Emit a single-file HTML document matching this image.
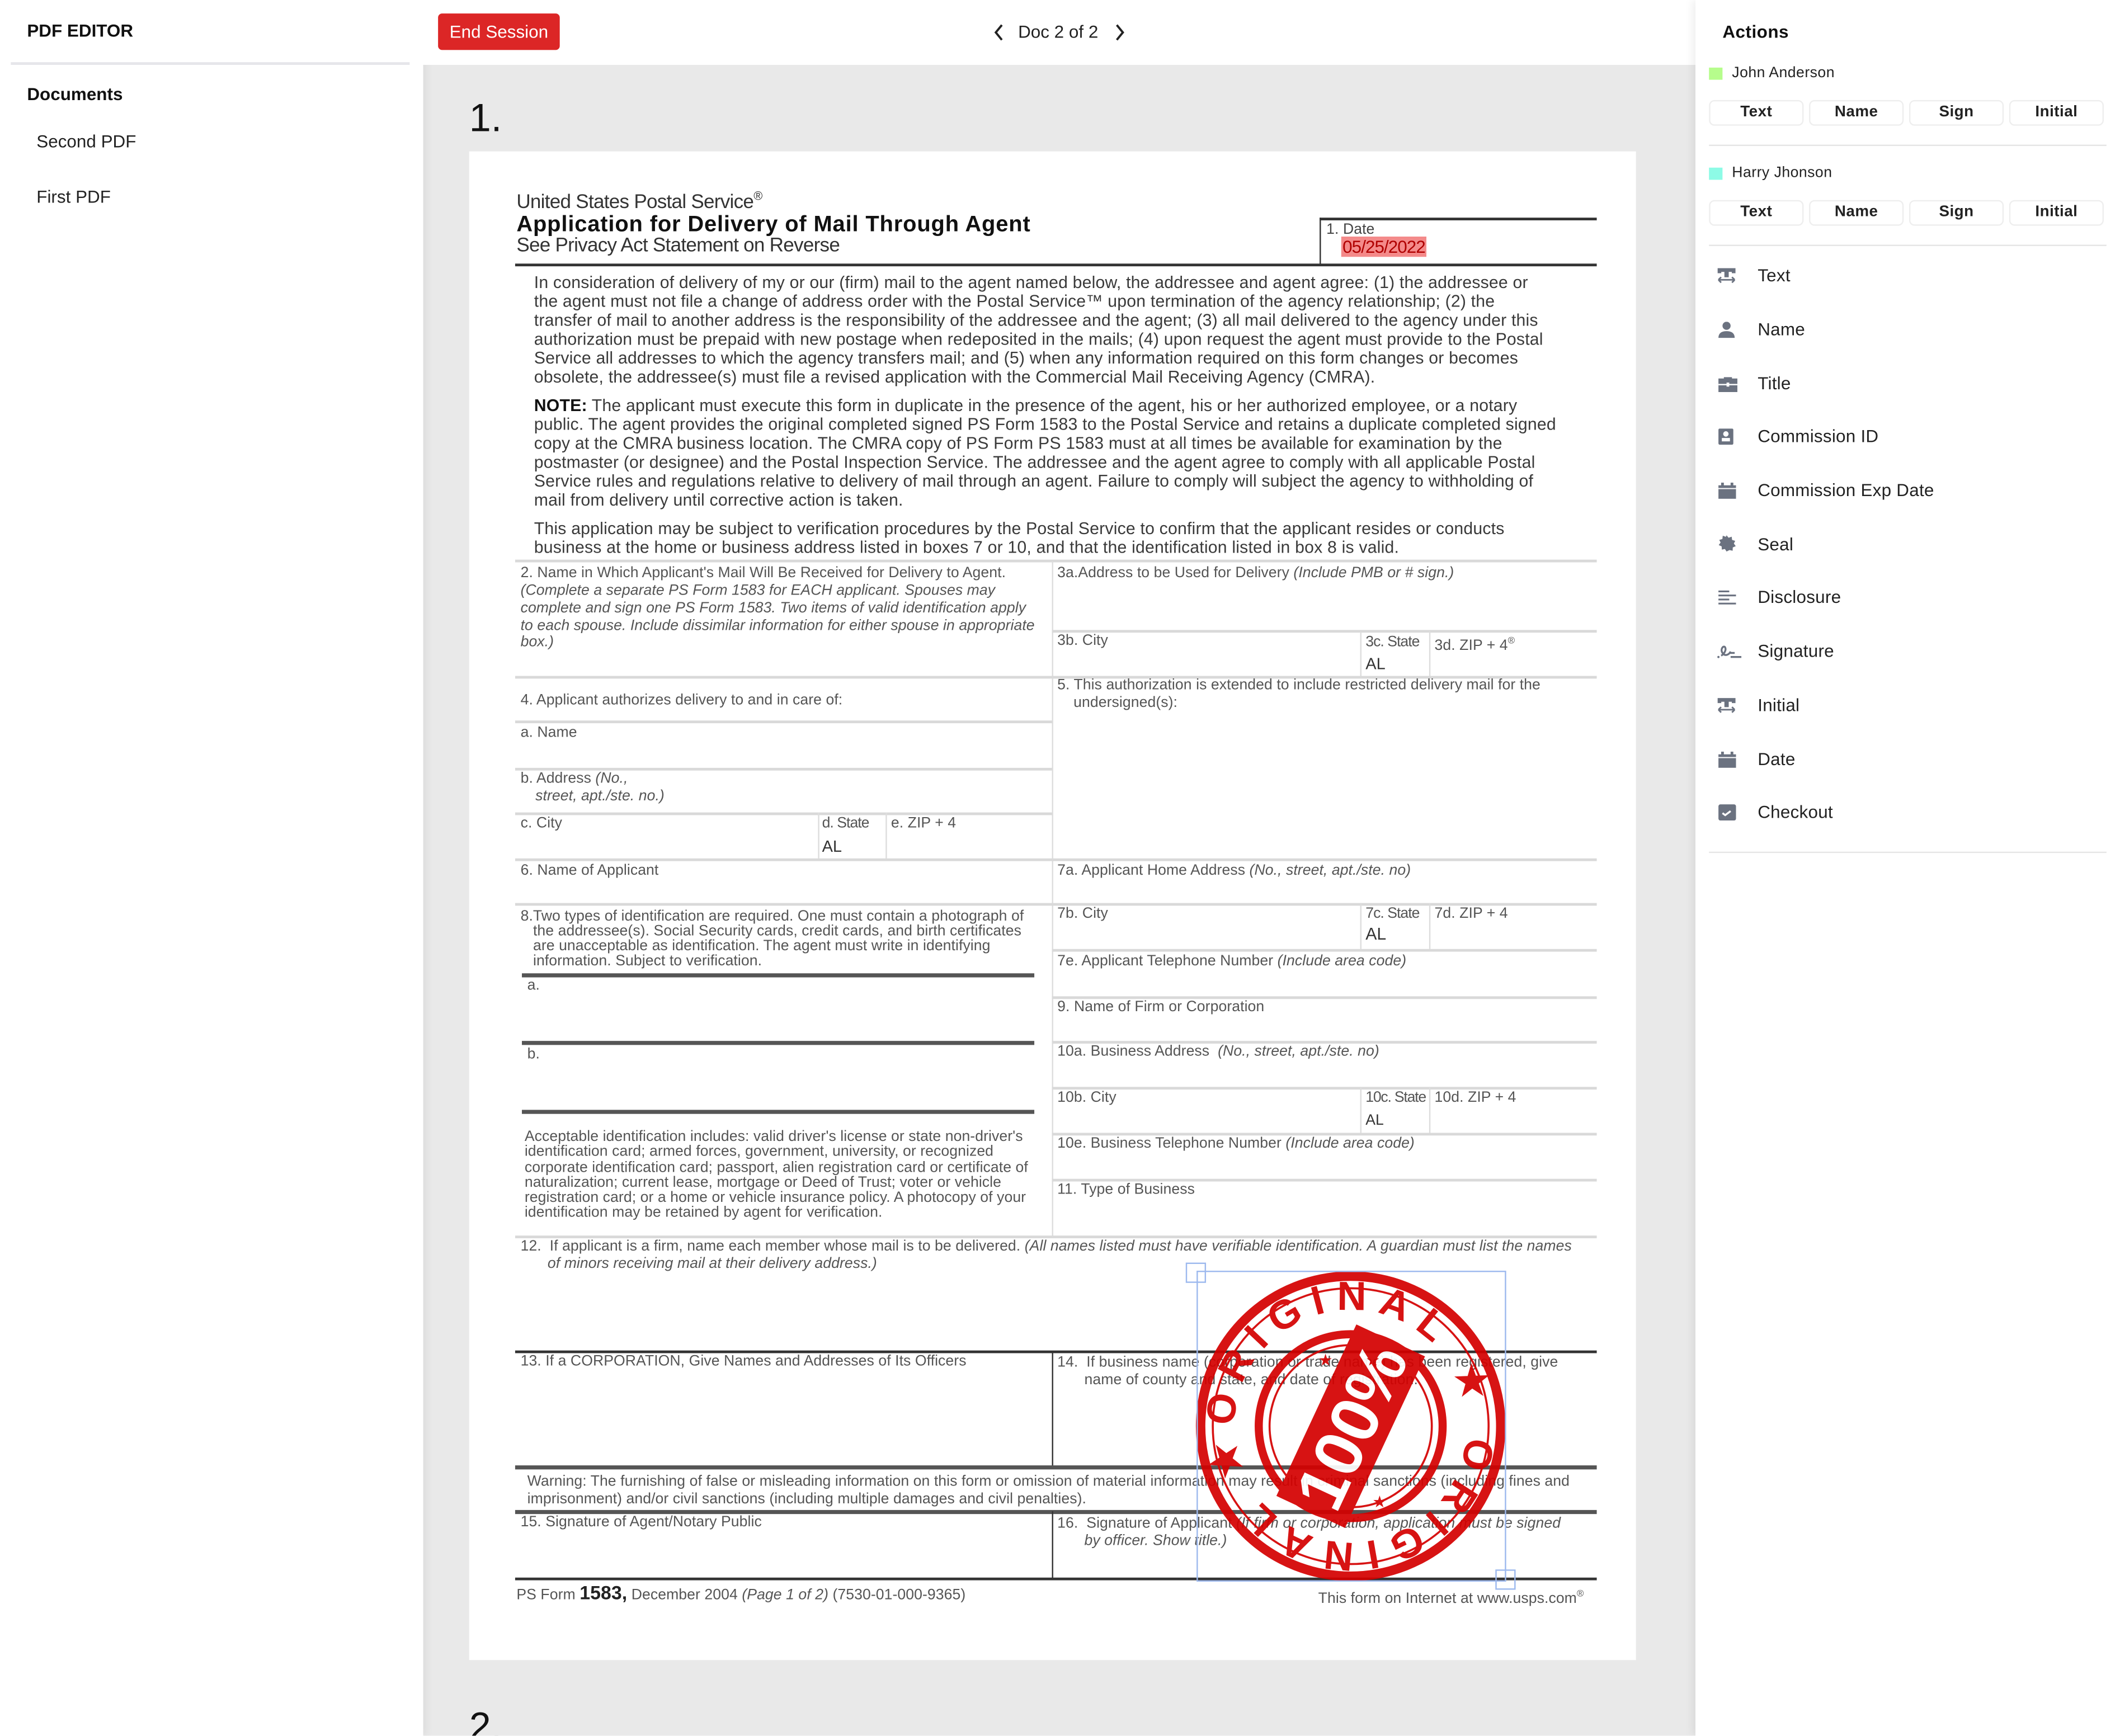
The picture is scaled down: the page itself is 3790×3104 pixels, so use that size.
<!DOCTYPE html>
<html><head><meta charset="utf-8">
<style>
*{margin:0;padding:0;box-sizing:border-box}
html,body{width:3790px;height:3102px;overflow:hidden;background:#fff;font-family:"Liberation Sans",sans-serif}
#s{position:absolute;left:0;top:0;width:1568px;height:1284px;transform:scale(2.41709);transform-origin:0 0;overflow:hidden}
.a{position:absolute;white-space:nowrap}
#left{position:absolute;left:0;top:0;width:313px;height:1284px;background:#fff;box-shadow:2px 0 6px rgba(0,0,0,.06)}
#main{position:absolute;left:313px;top:48px;width:941px;height:1236px;background:#e9e9e9}
#top{position:absolute;left:313px;top:0;width:941px;height:48px;background:#fff}
#right{position:absolute;left:1254px;top:0;width:314px;height:1284px;background:#fff;box-shadow:-2px 0 6px rgba(0,0,0,.07)}
.btn{position:absolute;top:0;height:19px;width:70px;border:1.5px solid #eee;border-radius:4px;font-size:11.5px;font-weight:bold;color:#222;text-align:center;line-height:16px;letter-spacing:.2px}
.it{position:absolute;left:46px;font-size:13px;color:#222;letter-spacing:.1px}
.ic{position:absolute;left:16px;width:14px;height:12px}
#page{position:absolute;left:347px;top:112px;width:863px;height:1116px;background:#fff}
.p{position:absolute;white-space:nowrap;font-size:12.5px;letter-spacing:.08px;color:#3a3a3a;line-height:14px}
.l{position:absolute;white-space:nowrap;font-size:11px;letter-spacing:.03px;color:#555;line-height:12px}
.h{position:absolute;background:#d9d9d9;height:1.5px}
.hd{position:absolute;background:#333;height:2px}
.v{position:absolute;background:#ddd;width:1px}
.vd{position:absolute;background:#333;width:1.3px}
i{font-style:italic}
</style></head><body>
<div id="s">
<div id="main">
  <div class="a" style="left:34px;top:24px;font-size:29px;color:#111">1.</div>
  <div class="a" style="left:34px;top:1214px;font-size:29px;color:#111">2.</div>
</div>
<div id="left">
  <div class="a" style="left:20px;top:15px;font-size:13px;font-weight:bold;color:#111">PDF EDITOR</div>
  <div class="a" style="left:8px;top:46px;width:295px;height:1.5px;background:#e6e6ea"></div>
  <div class="a" style="left:20px;top:62px;font-size:13px;font-weight:bold;color:#111">Documents</div>
  <div class="a" style="left:27px;top:97px;font-size:13px;color:#222">Second PDF</div>
  <div class="a" style="left:27px;top:138px;font-size:13px;color:#222">First PDF</div>
</div>
<div id="top">
  <div class="a" style="left:11px;top:10px;width:90px;height:27px;background:#dc2626;border-radius:3px;color:#fff;font-size:13px;text-align:center;line-height:27px">End Session</div>
  <svg class="a" style="left:421px;top:17px" width="10" height="14" viewBox="0 0 10 14"><path d="M7 1.5L2.5 7L7 12.5" fill="none" stroke="#222" stroke-width="1.6"/></svg>
  <div class="a" style="left:440px;top:16px;font-size:13px;color:#222">Doc 2 of 2</div>
  <svg class="a" style="left:510px;top:17px" width="10" height="14" viewBox="0 0 10 14"><path d="M3 1.5L7.5 7L3 12.5" fill="none" stroke="#222" stroke-width="1.6"/></svg>
</div>
<div id="right">
  <div class="a" style="left:20px;top:16px;font-size:13px;font-weight:bold;color:#111;letter-spacing:.2px">Actions</div>
  <div class="a" style="left:10px;top:50px;width:10px;height:9px;background:#b6fd8c"></div>
  <div class="a" style="left:27px;top:48px;font-size:11px;color:#222;letter-spacing:.2px">John Anderson</div>
  <div class="a" style="left:10px;top:74px;width:294px;height:20px">
    <div class="btn" style="left:0">Text</div><div class="btn" style="left:74px">Name</div><div class="btn" style="left:148px">Sign</div><div class="btn" style="left:222px">Initial</div>
  </div>
  <div class="a" style="left:10px;top:107px;width:294px;height:1px;background:#e5e5e5"></div>
  <div class="a" style="left:10px;top:124px;width:10px;height:9px;background:#8dfbe6"></div>
  <div class="a" style="left:27px;top:122px;font-size:11px;color:#222;letter-spacing:.2px">Harry Jhonson</div>
  <div class="a" style="left:10px;top:148px;width:294px;height:20px">
    <div class="btn" style="left:0">Text</div><div class="btn" style="left:74px">Name</div><div class="btn" style="left:148px">Sign</div><div class="btn" style="left:222px">Initial</div>
  </div>
  <div class="a" style="left:10px;top:181px;width:294px;height:1px;background:#e5e5e5"></div>

  <svg class="ic" style="top:198px" viewBox="0 0 14 12"><path d="M1 1h12v2.5h-1.5v-1h-3.5v4h-2v-4h-3.5v1h-1.5zM1 9h12M1 9l2-2M1 9l2 2M13 9l-2-2M13 9l-2 2" fill="#6b7280" stroke="#6b7280" stroke-width="1.2"/></svg>
  <div class="it" style="top:196px">Text</div>
  <svg class="ic" style="top:238px" viewBox="0 0 14 12"><circle cx="7" cy="3" r="3" fill="#6b7280"/><path d="M1 12c0-4 3-5 6-5s6 1 6 5z" fill="#6b7280"/></svg>
  <div class="it" style="top:236px">Name</div>
  <svg class="ic" style="top:278px;width:16px" viewBox="0 0 16 12"><path d="M5 2V1h6v1h4v10H1V2z" fill="#6b7280"/><rect x="1" y="6" width="14" height="1" fill="#fff"/><rect x="7" y="5" width="2" height="3" fill="#fff"/></svg>
  <div class="it" style="top:276px">Title</div>
  <svg class="ic" style="top:317px" viewBox="0 0 14 12"><rect x="1" y="0" width="11" height="12" rx="1" fill="#6b7280"/><circle cx="6.5" cy="4" r="2" fill="#fff"/><rect x="3.5" y="7" width="6" height="2.5" fill="#fff"/></svg>
  <div class="it" style="top:315px">Commission ID</div>
  <svg class="ic" style="top:357px" viewBox="0 0 14 12"><rect x="1" y="2" width="13" height="10" fill="#6b7280"/><rect x="3" y="0" width="2" height="3" fill="#6b7280"/><rect x="10" y="0" width="2" height="3" fill="#6b7280"/><rect x="1" y="4" width="13" height=".8" fill="#fff"/></svg>
  <div class="it" style="top:355px">Commission Exp Date</div>
  <svg class="ic" style="top:396px" viewBox="0 0 14 12"><path d="M7 0l1.5 1.8 2.3-.8.3 2.4 2.3.7-1 2 1.4 1.9-2.2 1-.1 2.4-2.3-.5L7 12 5.8 10.1l-2.3.5-.1-2.4-2.2-1L2.6 5.3 1.6 3.4l2.3-.7.3-2.4 2.3.8z" fill="#6b7280"/></svg>
  <div class="it" style="top:395px">Seal</div>
  <svg class="ic" style="top:436px" viewBox="0 0 14 12"><path d="M1 1.5h8M1 4.5h13M1 7.5h8M1 10.5h13" stroke="#6b7280" stroke-width="1.3"/></svg>
  <div class="it" style="top:434px">Disclosure</div>
  <svg class="ic" style="top:476px;width:18px" viewBox="0 0 18 12"><path d="M3 9c2-1 4-4 3-6S2 4 4 7s5 1 6-1M9 7h4M10 10h8" fill="none" stroke="#6b7280" stroke-width="1.4"/><circle cx="1" cy="10" r=".8" fill="#6b7280"/></svg>
  <div class="it" style="top:474px">Signature</div>
  <svg class="ic" style="top:516px" viewBox="0 0 14 12"><path d="M1 1h12v2.5h-1.5v-1h-3.5v4h-2v-4h-3.5v1h-1.5zM1 9h12M1 9l2-2M1 9l2 2M13 9l-2-2M13 9l-2 2" fill="#6b7280" stroke="#6b7280" stroke-width="1.2"/></svg>
  <div class="it" style="top:514px">Initial</div>
  <svg class="ic" style="top:556px" viewBox="0 0 14 12"><rect x="1" y="2" width="13" height="10" fill="#6b7280"/><rect x="3" y="0" width="2" height="3" fill="#6b7280"/><rect x="10" y="0" width="2" height="3" fill="#6b7280"/><rect x="1" y="4" width="13" height=".8" fill="#fff"/></svg>
  <div class="it" style="top:554px">Date</div>
  <svg class="ic" style="top:595px" viewBox="0 0 14 12"><rect x="1" y="0" width="13" height="12" rx="1.5" fill="#6b7280"/><path d="M4 6.5l2 1.5 4-3" fill="none" stroke="#fff" stroke-width="1.4"/></svg>
  <div class="it" style="top:593px">Checkout</div>
  <div class="a" style="left:10px;top:630px;width:294px;height:1px;background:#e5e5e5"></div>
</div>

<div id="page">
<div style="position:absolute;left:-347px;top:-112px;width:1568px;height:1284px">
  <div class="a" style="left:382px;top:140px;font-size:14.5px;letter-spacing:-.3px;color:#333">United States Postal Service<sup style="font-size:9px">®</sup></div>
  <div class="a" style="left:382px;top:157px;font-size:16.5px;font-weight:bold;letter-spacing:.35px;color:#111">Application for Delivery of Mail Through Agent</div>
  <div class="a" style="left:382px;top:174px;font-size:14.5px;letter-spacing:-.3px;color:#333">See Privacy Act Statement on Reverse</div>
  <div class="vd" style="left:976px;top:161px;height:35px"></div>
  <div class="hd" style="left:976px;top:161px;width:205px"></div>
  <div class="l" style="left:981px;top:164px;color:#444">1. Date</div>
  <div class="a" style="left:992px;top:175px;font-size:13px;letter-spacing:-.4px;color:#b00000;background:#f48a8a;padding:0 1px;line-height:15px">05/25/2022</div>
  <div class="hd" style="left:381px;top:195px;width:800px"></div>

  <div class="p" style="left:395px;top:202px">In consideration of delivery of my or our (firm) mail to the agent named below, the addressee and agent agree: (1) the addressee or</div>
  <div class="p" style="left:395px;top:216px">the agent must not file a change of address order with the Postal Service™ upon termination of the agency relationship; (2) the</div>
  <div class="p" style="left:395px;top:230px">transfer of mail to another address is the responsibility of the addressee and the agent; (3) all mail delivered to the agency under this</div>
  <div class="p" style="left:395px;top:244px">authorization must be prepaid with new postage when redeposited in the mails; (4) upon request the agent must provide to the Postal</div>
  <div class="p" style="left:395px;top:258px">Service all addresses to which the agency transfers mail; and (5) when any information required on this form changes or becomes</div>
  <div class="p" style="left:395px;top:272px">obsolete, the addressee(s) must file a revised application with the Commercial Mail Receiving Agency (CMRA).</div>
  <div class="p" style="left:395px;top:293px"><b style="color:#111">NOTE:</b> The applicant must execute this form in duplicate in the presence of the agent, his or her authorized employee, or a notary</div>
  <div class="p" style="left:395px;top:307px">public. The agent provides the original completed signed PS Form 1583 to the Postal Service and retains a duplicate completed signed</div>
  <div class="p" style="left:395px;top:321px">copy at the CMRA business location. The CMRA copy of PS Form PS 1583 must at all times be available for examination by the</div>
  <div class="p" style="left:395px;top:335px">postmaster (or designee) and the Postal Inspection Service. The addressee and the agent agree to comply with all applicable Postal</div>
  <div class="p" style="left:395px;top:349px">Service rules and regulations relative to delivery of mail through an agent. Failure to comply will subject the agency to withholding of</div>
  <div class="p" style="left:395px;top:363px">mail from delivery until corrective action is taken.</div>
  <div class="p" style="left:395px;top:384px">This application may be subject to verification procedures by the Postal Service to confirm that the applicant resides or conducts</div>
  <div class="p" style="left:395px;top:398px">business at the home or business address listed in boxes 7 or 10, and that the identification listed in box 8 is valid.</div>

  <div class="h" style="left:381px;top:414px;width:800px"></div>
  <div class="v" style="left:778px;top:415px;height:500px"></div>
  <div class="l" style="left:385px;top:418px">2. Name in Which Applicant's Mail Will Be Received for Delivery to Agent.</div>
  <div class="l" style="left:385px;top:431px"><i>(Complete a separate PS Form 1583 for EACH applicant. Spouses may</i></div>
  <div class="l" style="left:385px;top:444px"><i>complete and sign one PS Form 1583. Two items of valid identification apply</i></div>
  <div class="l" style="left:385px;top:457px"><i>to each spouse. Include dissimilar information for either spouse in appropriate</i></div>
  <div class="l" style="left:385px;top:469px"><i>box.)</i></div>
  <div class="l" style="left:782px;top:418px">3a.Address to be Used for Delivery <i>(Include PMB or # sign.)</i></div>
  <div class="h" style="left:778px;top:466px;width:403px"></div>
  <div class="l" style="left:782px;top:468px">3b. City</div>
  <div class="v" style="left:1006px;top:467px;height:34px"></div>
  <div class="v" style="left:1057px;top:467px;height:34px"></div>
  <div class="l" style="left:1010px;top:469px;letter-spacing:-.4px">3c. State</div>
  <div class="l" style="left:1061px;top:469px">3d. ZIP + 4<sup style="font-size:7px">®</sup></div>
  <div class="a" style="left:1010px;top:484px;font-size:12px;color:#333">AL</div>
  <div class="h" style="left:381px;top:500px;width:800px"></div>
  <div class="l" style="left:385px;top:512px">4. Applicant authorizes delivery to and in care of:</div>
  <div class="l" style="left:782px;top:501px">5. This authorization is extended to include restricted delivery mail for the</div>
  <div class="l" style="left:794px;top:514px">undersigned(s):</div>
  <div class="h" style="left:381px;top:533px;width:397px"></div>
  <div class="l" style="left:385px;top:536px">a. Name</div>
  <div class="h" style="left:381px;top:568px;width:397px"></div>
  <div class="l" style="left:385px;top:570px">b. Address <i>(No.,</i></div>
  <div class="l" style="left:396px;top:583px"><i>street, apt./ste. no.)</i></div>
  <div class="h" style="left:381px;top:601px;width:397px"></div>
  <div class="l" style="left:385px;top:603px">c. City</div>
  <div class="v" style="left:605px;top:601px;height:34px"></div>
  <div class="v" style="left:655px;top:601px;height:34px"></div>
  <div class="l" style="left:608px;top:603px;letter-spacing:-.4px">d. State</div>
  <div class="l" style="left:659px;top:603px">e. ZIP + 4</div>
  <div class="a" style="left:608px;top:619px;font-size:12px;color:#333">AL</div>
  <div class="h" style="left:381px;top:635px;width:800px"></div>
  <div class="l" style="left:385px;top:638px">6. Name of Applicant</div>
  <div class="l" style="left:782px;top:638px">7a. Applicant Home Address <i>(No., street, apt./ste. no)</i></div>
  <div class="h" style="left:381px;top:668px;width:800px"></div>
  <div class="l" style="left:385px;top:673px;line-height:11px">8.Two types of identification are required. One must contain a photograph of<br>&nbsp;&nbsp;&nbsp;the addressee(s). Social Security cards, credit cards, and birth certificates<br>&nbsp;&nbsp;&nbsp;are unacceptable as identification. The agent must write in identifying<br>&nbsp;&nbsp;&nbsp;information. Subject to verification.</div>
  <div class="l" style="left:782px;top:670px">7b. City</div>
  <div class="v" style="left:1006px;top:668px;height:34px"></div>
  <div class="v" style="left:1057px;top:668px;height:34px"></div>
  <div class="l" style="left:1010px;top:670px;letter-spacing:-.4px">7c. State</div>
  <div class="l" style="left:1061px;top:670px">7d. ZIP + 4</div>
  <div class="a" style="left:1010px;top:684px;font-size:12.5px;color:#333">AL</div>
  <div class="h" style="left:778px;top:702px;width:403px"></div>
  <div class="l" style="left:782px;top:705px">7e. Applicant Telephone Number <i>(Include area code)</i></div>
  <div class="a" style="left:386px;top:720px;width:379px;height:2.5px;background:#555"></div>
  <div class="l" style="left:390px;top:723px">a.</div>
  <div class="h" style="left:778px;top:737px;width:403px"></div>
  <div class="l" style="left:782px;top:739px">9. Name of Firm or Corporation</div>
  <div class="a" style="left:386px;top:770px;width:379px;height:2.5px;background:#555"></div>
  <div class="h" style="left:778px;top:770px;width:403px"></div>
  <div class="l" style="left:390px;top:774px">b.</div>
  <div class="l" style="left:782px;top:772px">10a. Business Address&nbsp; <i>(No., street, apt./ste. no)</i></div>
  <div class="h" style="left:778px;top:804px;width:403px"></div>
  <div class="l" style="left:782px;top:806px">10b. City</div>
  <div class="v" style="left:1006px;top:804px;height:34px"></div>
  <div class="v" style="left:1057px;top:804px;height:34px"></div>
  <div class="l" style="left:1010px;top:806px;letter-spacing:-.5px">10c. State</div>
  <div class="l" style="left:1061px;top:806px">10d. ZIP + 4</div>
  <div class="a" style="left:1010px;top:823px;font-size:11px;color:#333">AL</div>
  <div class="a" style="left:386px;top:821px;width:379px;height:2.5px;background:#555"></div>
  <div class="h" style="left:778px;top:838px;width:403px"></div>
  <div class="l" style="left:388px;top:836px;line-height:11.3px">Acceptable identification includes: valid driver's license or state non-driver's<br>identification card; armed forces, government, university, or recognized<br>corporate identification card; passport, alien registration card or certificate of<br>naturalization; current lease, mortgage or Deed of Trust; voter or vehicle<br>registration card; or a home or vehicle insurance policy. A photocopy of your<br>identification may be retained by agent for verification.</div>
  <div class="l" style="left:782px;top:840px">10e. Business Telephone Number <i>(Include area code)</i></div>
  <div class="h" style="left:778px;top:872px;width:403px"></div>
  <div class="l" style="left:782px;top:874px">11. Type of Business</div>
  <div class="h" style="left:381px;top:914px;width:800px"></div>
  <div class="l" style="left:385px;top:916px">12.&nbsp; If applicant is a firm, name each member whose mail is to be delivered. <i>(All names listed must have verifiable identification. A guardian must list the names</i></div>
  <div class="l" style="left:405px;top:929px"><i>of minors receiving mail at their delivery address.)</i></div>
  <div class="hd" style="left:381px;top:999px;width:800px"></div>
  <div class="vd" style="left:778px;top:1000px;height:85px"></div>
  <div class="l" style="left:385px;top:1001px">13. If a CORPORATION, Give Names and Addresses of Its Officers</div>
  <div class="l" style="left:782px;top:1002px">14.&nbsp; If business name (corporation or trade name) has been registered, give</div>
  <div class="l" style="left:802px;top:1015px">name of county and state, and date of registration.</div>
  <div class="a" style="left:381px;top:1084px;width:800px;height:2.5px;background:#555"></div>
  <div class="l" style="left:390px;top:1090px">Warning: The furnishing of false or misleading information on this form or omission of material information may result in criminal sanctions (including fines and</div>
  <div class="l" style="left:390px;top:1103px">imprisonment) and/or civil sanctions (including multiple damages and civil penalties).</div>
  <div class="a" style="left:381px;top:1117px;width:800px;height:2.5px;background:#555"></div>
  <div class="vd" style="left:778px;top:1118px;height:50px"></div>
  <div class="l" style="left:385px;top:1120px">15. Signature of Agent/Notary Public</div>
  <div class="l" style="left:782px;top:1121px">16.&nbsp; Signature of Applicant <i>(If firm or corporation, application must be signed</i></div>
  <div class="l" style="left:802px;top:1134px"><i>by officer. Show title.)</i></div>
  <div class="hd" style="left:381px;top:1167px;width:800px"></div>
  <div class="l" style="left:382px;top:1172px">PS Form <b style="font-size:14px;color:#222">1583,</b> December 2004 <i>(Page 1 of 2)</i> (7530-01-000-9365)</div>
  <div class="l" style="left:975px;top:1174px">This form on Internet at www.usps.com<sup style="font-size:7px">®</sup></div>

  <svg class="a" style="left:870px;top:925px" width="260" height="260" viewBox="870 925 260 260">
    <defs><path id="cp" d="M999 1055m-86 0a86 86 0 1 1 172 0a86 86 0 1 1 -172 0"/></defs>
    <g opacity=".92">
    <circle cx="999" cy="1055" r="111" fill="none" stroke="#d40000" stroke-width="7"/>
    <circle cx="999" cy="1055" r="102" fill="none" stroke="#d40000" stroke-width="1.5"/>
    <text font-family="Liberation Sans" font-weight="bold" font-size="30" fill="#d40000"><textPath href="#cp" startOffset="0" textLength="530" lengthAdjust="spacing">ORIGINAL ★ ORIGINAL ★</textPath></text>
    <circle cx="999" cy="1055" r="68" fill="none" stroke="#d40000" stroke-width="6"/>
    <circle cx="999" cy="1055" r="60" fill="none" stroke="#d40000" stroke-width="1.5"/>
    <g transform="rotate(-65 999 1055)">
      <rect x="929" y="1027" width="140" height="56" fill="#d40000"/>
      <text x="999" y="1073" text-anchor="middle" font-family="Liberation Sans" font-weight="bold" font-size="50" fill="#fff">100%</text>
    </g>
    <text x="975" y="1010" font-size="12" fill="#d40000">★</text><text x="1010" y="1010" font-size="12" fill="#d40000">★</text>
    <text x="970" y="1112" font-size="12" fill="#d40000">★</text><text x="1015" y="1115" font-size="12" fill="#d40000">★</text>
    </g>
    <rect x="885.5" y="940.5" width="228" height="229" fill="none" stroke="#9db9ee" stroke-width="1"/>
    <rect x="877.5" y="934.5" width="14" height="14" fill="none" stroke="#9db9ee" stroke-width="1"/>
    <rect x="1106.5" y="1161.5" width="14" height="14" fill="none" stroke="#9db9ee" stroke-width="1"/>
  </svg>
</div>
</div>
</div>
</body></html>
